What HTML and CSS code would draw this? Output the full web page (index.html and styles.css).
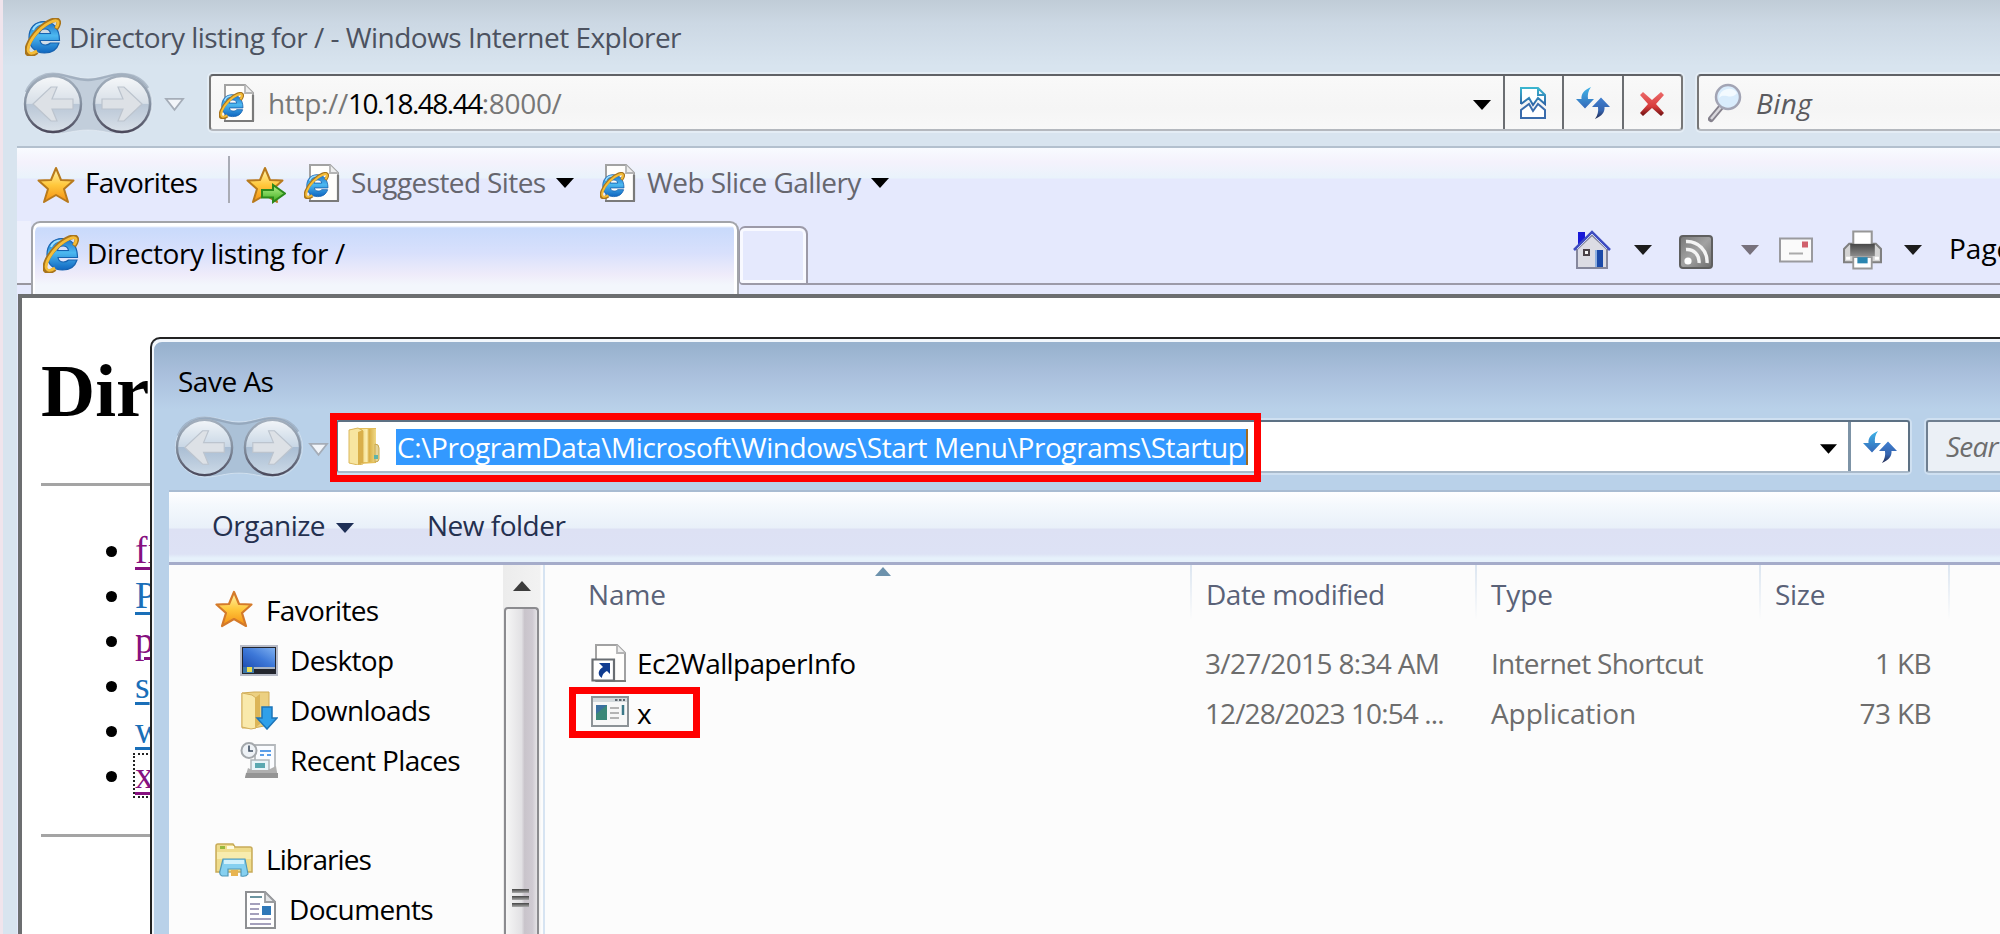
FILE: index.html
```html
<!DOCTYPE html>
<html lang="en">
<head>
<meta charset="utf-8">
<title>Directory listing for / - Windows Internet Explorer</title>
<link rel="stylesheet" href="styles.css">
</head>
<body>
<svg class="defs" width="0" height="0">
  <defs>
    <linearGradient id="blue" x1="0" y1="0" x2="0" y2="1"><stop offset="0" stop-color="#1d6fc4"/><stop offset=".45" stop-color="#4cb8f0"/><stop offset="1" stop-color="#0f66c0"/></linearGradient>
    <linearGradient id="gold" x1="0" y1="0" x2="0" y2="1"><stop offset="0" stop-color="#fff6b0"/><stop offset=".5" stop-color="#ffc83c"/><stop offset="1" stop-color="#f58f12"/></linearGradient>
    <linearGradient id="ball" x1="0" y1="0" x2="0" y2="1"><stop offset="0" stop-color="#fff" stop-opacity=".85"/><stop offset=".49" stop-color="#fff" stop-opacity=".35"/><stop offset=".5" stop-color="#a9b9ce" stop-opacity=".35"/><stop offset="1" stop-color="#fff" stop-opacity=".4"/></linearGradient>
    <linearGradient id="rim" x1="0" y1="0" x2="0" y2="1"><stop offset="0" stop-color="#a3afbd"/><stop offset=".5" stop-color="#8490a0"/><stop offset="1" stop-color="#4c4a5c"/></linearGradient>
    <linearGradient id="folder" x1="0" y1="0" x2="1" y2="0"><stop offset="0" stop-color="#f3dc85"/><stop offset=".35" stop-color="#fbeeb4"/><stop offset=".5" stop-color="#d8ae44"/><stop offset="1" stop-color="#f0d987"/></linearGradient>
    <linearGradient id="desk" x1="0" y1="1" x2="1" y2="0"><stop offset="0" stop-color="#1f4fb4"/><stop offset=".5" stop-color="#3d78d8"/><stop offset="1" stop-color="#7eb0f0"/></linearGradient>
    <linearGradient id="refr" x1="0" y1="0" x2="0" y2="1"><stop offset="0" stop-color="#3fb4e8"/><stop offset="1" stop-color="#3568b8"/></linearGradient>
    <linearGradient id="refr2" x1="0" y1="0" x2="0" y2="1"><stop offset="0" stop-color="#3f7fd0"/><stop offset=".6" stop-color="#3565b0"/><stop offset="1" stop-color="#232a50"/></linearGradient>
    <linearGradient id="cross" x1="0" y1="0" x2="0" y2="1"><stop offset="0" stop-color="#ec6a6a"/><stop offset=".6" stop-color="#d83c3c"/><stop offset="1" stop-color="#6c1010"/></linearGradient>
    <linearGradient id="gray" x1="0" y1="0" x2="1" y2="1"><stop offset="0" stop-color="#777"/><stop offset=".5" stop-color="#a2a2a2"/><stop offset="1" stop-color="#6c6c6c"/></linearGradient>
    <linearGradient id="split" x1="0" y1="0" x2="0" y2="1"><stop offset="0" stop-color="#3bb5cf"/><stop offset="1" stop-color="#2d62a6"/></linearGradient>
    <linearGradient id="dark" x1="0" y1="0" x2="0" y2="1"><stop offset="0" stop-color="#484848"/><stop offset="1" stop-color="#8c8c8c"/></linearGradient>
    <linearGradient id="green" x1="0" y1="0" x2="0" y2="1"><stop offset="0" stop-color="#b6f28c"/><stop offset="1" stop-color="#3fae20"/></linearGradient>

    <symbol id="ie" viewBox="0 0 36 38">
      <path d="M19 3.500C28 3.500 34.500 10 34.500 22.500H15C15.500 25.500 17.500 27 20.500 27C23 27 24.500 26 25.500 25H34C32 31.500 27 35 19.500 35C10 35 4 28.500 4 19.500C4 10 10 3.500 19 3.500ZM14.500 15.500H25.500C25 12.500 23 11 20 11C17 11 15 12.500 14.500 15.500Z" fill="url(#blue)" stroke="#1763b0" stroke-width="1.200"/>
      <path d="M8 12C10 7 15 5 20 5.500" fill="none" stroke="#9be0ff" stroke-width="2"/>
      <path d="M31 11C36 4 34 0 27 2.500C18 6 7 17 3 27C-1 37 5 39 12 34" fill="none" stroke="#a8741c" stroke-width="4.600"/>
      <path d="M31 10C35 4 33 1 27 3.500C18 7 8 17 4 27C1 36 6 37 12 33" fill="none" stroke="#f5bd38" stroke-width="2.800"/>
    </symbol>
    <symbol id="iepage" viewBox="0 0 36 38">
      <path d="M6 1H26L34 9V37H6Z" fill="#fffefc" stroke="#a2a2a2" stroke-width="2"/>
      <path d="M26 1V9H34" fill="#eee" stroke="#b4b4b4" stroke-width="1.800"/>
      <path d="M5 37H35M34 11V37" stroke="#7a7a7a" stroke-width="2.200" fill="none"/>
      <use href="#ie" x="0" y="8" width="25" height="27"/>
    </symbol>
    <symbol id="star" viewBox="0 0 38 38">
      <path d="M19 2L24 14L36.500 14.500L27 23L31 36L19 29L7 36L11 23L1.500 14.500L14 14Z" fill="url(#gold)" stroke="#b87a1c" stroke-width="2" stroke-linejoin="round"/>
    </symbol>
    <symbol id="starred" viewBox="0 0 38 38">
      <path d="M19 2L24 14L36.500 14.500L27 23L31 36L19 29L7 36L11 23L1.500 14.500L14 14Z" fill="url(#gold)" stroke="#d47a2a" stroke-width="2.200" stroke-linejoin="round"/>
    </symbol>
    <symbol id="addstar" viewBox="0 0 40 38">
      <use href="#star" width="38" height="38"/>
      <path d="M16 24H27V19L39 27.500L27 36V31.500H16Z" fill="url(#green)" stroke="#2c8a1c" stroke-width="2"/>
    </symbol>
    <symbol id="nav" viewBox="0 0 132 64">
      <path d="M32 1C44 1 52 6 66 6C80 6 88 1 100 1A30 30 0 0 1 100 62C88 62 80 58 66 58C52 58 44 62 32 62A30 30 0 0 1 32 1Z" fill="#8797aa" fill-opacity=".28" stroke="#eef4fa" stroke-opacity=".5" stroke-width="1"/>
      <path d="M4 20C10 5 24 1 34 2C46 3 54 8 66 8C78 8 88 2 99 2C110 2 120 6 126 16" fill="none" stroke="#7c8b9f" stroke-opacity=".45" stroke-width="2.500"/>
      <circle cx="31" cy="32" r="28" fill="url(#ball)" stroke="url(#rim)" stroke-width="2.400"/>
      <circle cx="100" cy="32" r="28" fill="url(#ball)" stroke="url(#rim)" stroke-width="2.400"/>
      <path d="M11 32L29 15H35L30 27H51V37H30L35 49H29Z" fill="#dde1e6" stroke="#bcc4ce" stroke-width="1.200"/>
      <path d="M120 32L102 15H96L101 27H80V37H101L96 49H102Z" fill="#dde1e6" stroke="#bcc4ce" stroke-width="1.200"/>
    </symbol>
    <symbol id="hist" viewBox="0 0 22 15"><path d="M2 1.500H20L11 13Z" fill="#f2f5f9" stroke="#a5adb8" stroke-width="1.800"/></symbol>
    <symbol id="down" viewBox="0 0 18 10"><path d="M0 0H18L9 10Z" fill="currentColor"/></symbol>
    <symbol id="compat" viewBox="0 0 28 34">
      <path d="M2 18V2H19L26 9V18L19 12L14 19L10 12L2 18M19 2V9H26" fill="#fff" stroke="url(#split)" stroke-width="2"/>
      <path d="M2 32V24L10 18L14 25L19 18L26 24V32Z" fill="#fff" stroke="#3a6cac" stroke-width="2"/>
    </symbol>
    <symbol id="refresh" viewBox="0 0 34 32">
      <path d="M15 0C8 3 5 7 5.500 12H0L9 21.500L18 12H12C11.500 8 12 4 15 0Z" fill="url(#refr)"/>
      <path d="M19 32C26 29 29 25 28.500 20H34L25 10.500L16 20H22C22.500 24 22 28 19 32Z" fill="url(#refr2)"/>
    </symbol>
    <symbol id="stop" viewBox="0 0 26 26"><path d="M1 4L4 1L13 9L22 1L25 4L17 13L25 22L22 25L13 17L4 25L1 22L9 13Z" fill="url(#cross)"/></symbol>
    <symbol id="lens" viewBox="0 0 34 40">
      <path d="M3 36L13 24" stroke="#85818c" stroke-width="6" stroke-linecap="round"/><path d="M3 36L13 24" stroke="#d9d7dc" stroke-width="2.500"/>
      <circle cx="20" cy="14" r="12" fill="#d9ecfc" stroke="#a2a4b4" stroke-width="2.500"/><path d="M11 15C16 9 23 18 29 10A10 10 0 0 0 11 15Z" fill="#f3faff"/>
    </symbol>
    <symbol id="home" viewBox="0 0 38 40">
      <path d="M4 19L19 5L34 19V38H4Z" fill="#dcdce4" stroke="#85879c" stroke-width="2"/><path d="M5 2H12V9L5 15Z" fill="#1818d8"/>
      <path d="M1 20L19 2L37 20" fill="none" stroke="#3e4cc0" stroke-width="2.600"/><path d="M4 19L19 4L34 19" fill="none" stroke="#c4cdf4" stroke-width="1"/>
      <path d="M11 20H16V25H11Z" fill="#f4f4f4" stroke="#4a4248" stroke-width="2"/><path d="M22 20H30V37H22Z" fill="#1c4aa8"/><path d="M22 20H24V37H22Z" fill="#8fb0e0"/>
    </symbol>
    <symbol id="rss" viewBox="0 0 34 34">
      <rect x="1" y="1" width="32" height="32" rx="3" fill="url(#gray)" stroke="#5f5f5f" stroke-width="2"/>
      <circle cx="9" cy="26" r="3.600" fill="#fff"/><path d="M7 14.500A12 12 0 0 1 20 28M7 6.500A20 20 0 0 1 28 28" fill="none" stroke="#f4f4f4" stroke-width="3.400"/>
    </symbol>
    <symbol id="mail" viewBox="0 0 34 25"><path d="M1 1H33V24H1Z" fill="#fafafa" stroke="#9a9a9e" stroke-width="2"/><path d="M10 16H24" stroke="#aaa" stroke-width="2"/><path d="M23 4H29V10H23Z" fill="#d0606c"/></symbol>
    <symbol id="print" viewBox="0 0 38 38">
      <path d="M1 18L6 13H32L37 18V31H1Z" fill="#d4d4d4" stroke="#808080" stroke-width="2"/><path d="M10 1H28V15H10Z" fill="#fff" stroke="#979797" stroke-width="2"/>
      <path d="M7 13H31V25H7Z" fill="url(#dark)"/><path d="M10 26H28V37H10Z" fill="#fff" stroke="#979797" stroke-width="1.800"/><path d="M14 26H24V32H14Z" fill="#2b86b0"/><path d="M3 27H7M31 27H35" stroke="#fff" stroke-width="3"/>
    </symbol>
    <symbol id="dir" viewBox="0 0 32 38">
      <path d="M1 3L10 1H28V36L12 37L1 36Z" fill="#e4bd58"/><path d="M14 2H28V35H14Z" fill="url(#folder)"/><path d="M1 3L10 1L15 4V37L10 38L1 36Z" fill="#f7e5a0" stroke="#dcb85a" stroke-width="1"/><path d="M10 5L15 3V36L10 38Z" fill="#d9af4a"/><path d="M27 17Q31 17 31 21V32Q31 35 27 35Z" fill="#e5d49a" stroke="#c9a850" stroke-width="1"/><path d="M26 28H30V32H26Z" fill="#5fb3a8"/>
    </symbol>
    <symbol id="desktop" viewBox="0 0 38 31">
      <path d="M1 1H37V30H1Z" fill="#23262e" stroke="#b8bcc8" stroke-width="2"/><path d="M3 3H35V22H3Z" fill="url(#desk)"/><path d="M3 22L35 22V24H3Z" fill="#a8b4c4"/><path d="M3 22H14V28H3Z" fill="#3c78a8"/><path d="M7 22H12V27H7Z" fill="#e8dc50"/>
    </symbol>
    <symbol id="downloads" viewBox="0 0 38 39">
      <path d="M2 2L14 1H29V34L14 37H2Z" fill="#ecd081" stroke="#d0ab54" stroke-width="1"/><path d="M2 2L12 4L16 7V37L11 38L2 36Z" fill="#f9e9ab" stroke="#d4b05c" stroke-width="1"/><path d="M15 7L20 3V33L15 37Z" fill="#dcb557"/><path d="M22 16H32V27H37L27 38L17 27H22Z" fill="#2fa0ea" stroke="#1d74b8" stroke-width="1.500"/>
    </symbol>
    <symbol id="recent" viewBox="0 0 38 37">
      <path d="M15 3H35V28H15Z" fill="#fafcff" stroke="#b4b8bc" stroke-width="1.800"/><path d="M20 9H31M20 13H24M27 13H31" stroke="#5a9ee8" stroke-width="2"/><path d="M11 18H29V29H11Z" fill="#e8f4f8" stroke="#b0b6ba" stroke-width="1.500"/><path d="M15 21H25V26H15Z" fill="#5aa8b0"/><path d="M8 26L12 28H28L36 24L38 36H5Z" fill="#b0b0b0"/><path d="M6 31H38V36H5Z" fill="#959595"/>
      <circle cx="9" cy="8.500" r="7.500" fill="#eef2f6" stroke="#a4a8ac" stroke-width="2"/><path d="M9 3.500V9H13" fill="none" stroke="#3c4c60" stroke-width="1.600"/>
    </symbol>
    <symbol id="libs" viewBox="0 0 38 34">
      <path d="M1 3Q1 1 3 1H18L20 4H35Q37 4 37 6V29H1Z" fill="#efdc8c" stroke="#c8ab58" stroke-width="1.500"/><path d="M5 3H10V6H5Z" fill="#96b83c"/><path d="M12 3H19V6H12Z" fill="#fffbe0"/><path d="M2 9H36V16H2Z" fill="#f8ecae"/><path d="M8 16H30L33 31Q31 34 26 33V26H13V33H7Q4 32 5 28Z" fill="#86d0f0" stroke="#5098b8" stroke-width="1.200"/><path d="M9 17H29V21H9Z" fill="#d0f0fc"/><path d="M16 27H23V33H16Z" fill="#e8b450"/>
    </symbol>
    <symbol id="doc" viewBox="0 0 31 38">
      <path d="M1 1H20L30 11V37H1Z" fill="#fff" stroke="#8e9093" stroke-width="2"/><path d="M20 1V11H30Z" fill="#e4e6e8" stroke="#9a9c9f" stroke-width="1.800"/><path d="M5 6H17" stroke="#6c94a0" stroke-width="2"/><path d="M5 13H15M5 18H14M5 23H14M5 28H26M5 33H26" stroke="#a4a0bc" stroke-width="1.800"/><path d="M17 15H26V24H17Z" fill="#2f78b8"/>
    </symbol>
    <symbol id="shortcut" viewBox="0 0 36 38">
      <path d="M5 1H26L34 9V37H5Z" fill="#fffefc" stroke="#a2a2a2" stroke-width="2"/><path d="M26 1V9H34" fill="#eee" stroke="#b4b4b4" stroke-width="1.800"/><path d="M5 37H35" stroke="#7a7a7a" stroke-width="2"/>
      <path d="M1.500 15.500H23V36.500H1.500Z" fill="#fff" stroke="#6a6e72" stroke-width="2.200"/><path d="M8 19H19V30L16 27C12 29 11 32 11 34C6 31 7 26 12 23Z" fill="#103c90"/>
    </symbol>
    <symbol id="app" viewBox="0 0 38 31">
      <path d="M1 1H37V30H1Z" fill="#f7f7f7" stroke="#8c9296" stroke-width="2"/><path d="M2 2H36V6H2Z" fill="#d4dadd"/><path d="M24 4H34" stroke="#5c646c" stroke-width="2" stroke-dasharray="2.500 1.500"/><path d="M5 9H16V24H5Z" fill="#3b8878"/><path d="M5 9H16L5 18Z" fill="#3a70a0"/><path d="M19 12H28M19 17H28M19 22H28" stroke="#b4b4b4" stroke-width="2"/><path d="M32 9V19" stroke="#3c7888" stroke-width="2.500"/>
    </symbol>
  </defs>
</svg>

<div class="browser">
  <header class="titlebar"><svg class="ic-ie"><use href="#ie"/></svg><span class="title">Directory listing for / - Windows Internet Explorer</span></header>
  <div class="navbar">
    <svg class="navballs"><use href="#nav"/></svg>
    <svg class="history"><use href="#hist"/></svg>
    <div class="address">
      <svg class="ic-page"><use href="#iepage"/></svg>
      <span class="url">http://<b>10.18.48.44</b>:8000/</span>
      <svg class="caret addr-caret"><use href="#down"/></svg>
      <div class="cell"><svg class="ic-compat"><use href="#compat"/></svg></div>
      <div class="cell"><svg class="ic-refresh"><use href="#refresh"/></svg></div>
      <div class="cell"><svg class="ic-stop"><use href="#stop"/></svg></div>
    </div>
    <div class="search"><svg class="ic-lens"><use href="#lens"/></svg><span class="bing">Bing</span></div>
  </div>
  <div class="chrome">
    <div class="favbar">
      <svg class="ic-star"><use href="#star"/></svg><span class="fav-label">Favorites</span>
      <i class="sep"></i>
      <svg class="ic-add"><use href="#addstar"/></svg>
      <svg class="ic-page fav-page"><use href="#iepage"/></svg><span class="fav-link sites">Suggested Sites</span><svg class="caret"><use href="#down"/></svg>
      <svg class="ic-page slice-page"><use href="#iepage"/></svg><span class="fav-link slices">Web Slice Gallery</span><svg class="caret"><use href="#down"/></svg>
    </div>
    <div class="tabrow">
      <div class="tab-lead"></div>
      <div class="tab"><svg class="ic-ie"><use href="#ie"/></svg><span class="tab-label">Directory listing for /</span></div>
      <div class="newtab"></div>
      <div class="cmds">
        <svg class="ic-home"><use href="#home"/></svg><svg class="caret dk c1"><use href="#down"/></svg>
        <svg class="ic-rss"><use href="#rss"/></svg><svg class="caret dim c2"><use href="#down"/></svg>
        <svg class="ic-mail"><use href="#mail"/></svg>
        <svg class="ic-print"><use href="#print"/></svg><svg class="caret dk c3"><use href="#down"/></svg>
        <span class="page">Page</span>
      </div>
    </div>
    <main class="viewport">
      <h1>Dir</h1>
      <hr>
      <ul>
        <li><a class="seen">fi</a></li>
        <li><a>P</a></li>
        <li><a class="seen">p</a></li>
        <li><a>s</a></li>
        <li><a>w</a></li>
        <li><a class="seen focus">x</a></li>
      </ul>
      <hr>
    </main>
  </div>
</div>

<section class="dialog">
  <div class="dlg-title">Save As</div>
  <div class="dlg-nav">
    <svg class="navballs"><use href="#nav"/></svg>
    <svg class="history"><use href="#hist"/></svg>
    <div class="path">
      <svg class="ic-dir"><use href="#dir"/></svg>
      <span class="path-text">C:\ProgramData\Microsoft\Windows\Start Menu\Programs\Startup</span>
      <svg class="caret path-caret"><use href="#down"/></svg>
      <div class="path-refresh"><svg class="ic-refresh"><use href="#refresh"/></svg></div>
    </div>
    <div class="dlg-search">Sear</div>
  </div>
  <div class="dlg-body">
    <div class="toolbar"><span class="organize">Organize</span><svg class="caret org-caret"><use href="#down"/></svg><span class="newfolder">New folder</span></div>
    <div class="panes">
      <nav class="tree">
        <div class="node root"><svg class="ic-star"><use href="#starred"/></svg><span>Favorites</span></div>
        <div class="node"><svg class="ic-desktop"><use href="#desktop"/></svg><span>Desktop</span></div>
        <div class="node"><svg class="ic-dl"><use href="#downloads"/></svg><span>Downloads</span></div>
        <div class="node"><svg class="ic-recent"><use href="#recent"/></svg><span>Recent Places</span></div>
        <div class="node root gap"><svg class="ic-libs"><use href="#libs"/></svg><span class="t-libs">Libraries</span></div>
        <div class="node"><svg class="ic-doc"><use href="#doc"/></svg><span>Documents</span></div>
      </nav>
      <div class="scrollbar"><i class="up"></i><div class="thumb"><i></i><i></i><i></i></div></div>
      <div class="files">
        <div class="row head">
          <div class="name">Name</div><div class="date">Date modified</div><div class="type">Type</div><div class="size">Size</div>
          <i class="sort"></i>
        </div>
        <div class="row"><div class="name"><svg class="ic-short"><use href="#shortcut"/></svg><span class="t-ec2">Ec2WallpaperInfo</span></div><div class="date">3/27/2015 8:34 AM</div><div class="type t-short">Internet Shortcut</div><div class="size">1 KB</div></div>
        <div class="row"><div class="name"><svg class="ic-app"><use href="#app"/></svg><span>x</span></div><div class="date d2">12/28/2023 10:54 ...</div><div class="type t-app">Application</div><div class="size">73 KB</div></div>
      </div>
    </div>
  </div>
</section>
<div class="mark mark-path"></div>
<div class="mark mark-file"></div>
</body>
</html>
```
FILE: styles.css
```css
* { box-sizing: border-box; }
html, body { margin: 0; height: 934px; overflow: hidden; }
body { position: relative; font: 28px/36px "Open Sans", "Noto Sans", sans-serif; letter-spacing: -0.5px; color: #000; }
svg { display: block; flex: none; }
.defs { position: absolute; }
span { white-space: nowrap; }

.browser { width: 2000px; height: 934px; overflow: hidden; border-left: 3px solid #f0e4ec; background: linear-gradient(#c0ccd7, #ccd8e4 24px, #d8e4ef 66px); }
.titlebar { display: flex; align-items: center; height: 66px; padding: 8px 0 0 22px; color: #4c5260; }
.titlebar .title { margin: -1px 0 0 8px; letter-spacing: -0.53px; }
.ic-ie { width: 36px; height: 38px; }

.navbar { display: flex; height: 80px; padding-left: 19px; }
.navballs { width: 132px; height: 64px; margin-top: 6px; }
.history { width: 21px; height: 15px; margin: 31px 0 0 10px; }
.address, .search { display: flex; height: 57px; margin-top: 8px; background: linear-gradient(#f9f9f9, #f5f5f5 60%, #f8f8f8); border: 2px solid #777; border-top-color: #606266; border-bottom-color: #b4b8be; border-radius: 4px; box-shadow: 0 0 0 2px #e4edf5; }
.address { width: 1474px; margin-left: 24px; }
.ic-page { width: 36px; height: 38px; }
.address .ic-page { margin: 8px 0 0 8px; }
.url { width: 1206px; margin: 9px 0 0 13px; color: #777; letter-spacing: -0.3px; }
.url b { font-weight: 400; color: #000; letter-spacing: -1.5px; }
.caret { width: 18px; height: 10px; color: #000; }
.addr-caret { margin: 24px 12px 0 -1px; }
.cell { display: flex; justify-content: center; align-items: center; width: 59.500px; border-left: 2px solid #6b6e72; }
.ic-compat { width: 28px; height: 34px; }
.ic-refresh { width: 34px; height: 32px; }
.ic-stop { width: 26px; height: 26px; margin-top: 3px; }
.search { flex: 1; margin-left: 14px; border-right: 0; border-radius: 4px 0 0 4px; }
.ic-lens { width: 34px; height: 40px; margin: 7px 0 0 9px; }
.bing { margin: 9px 0 0 14px; font-style: italic; color: #5a5a5e; letter-spacing: 0.4px; }

.chrome { display: flex; flex-direction: column; height: 788px; margin-left: 14px; border-top: 2px solid #b3c0ce; background: linear-gradient(#f8fbff, #f4f2fc 14px, #e9f3fb 30px, #e5e9fd 31px, #e5e9fd 100%); }
.favbar { display: flex; height: 73px; padding-left: 20px; }
.ic-star { width: 38px; height: 38px; }
.favbar .ic-star { margin-top: 18px; }
.fav-label { width: 120px; margin: 16px 0 0 10px; letter-spacing: -0.7px; }
.sep { width: 2px; height: 47px; margin: 8px 0 0 23px; background: #a9abb5; }
.ic-add { width: 40px; height: 38px; margin: 18px 0 0 16px; }
.favbar .ic-page { margin-top: 16px; }
.fav-page { margin-left: 18px; }
.fav-link { margin: 16px 0 0 11px; color: #66666e; }
.sites { width: 197px; letter-spacing: -0.6px; }
.slices { width: 216px; letter-spacing: -0.55px; }
.favbar .caret { margin-top: 30px; margin-left: 8px; }
.favbar .slice-page { margin-left: 26px; }

.tabrow { display: flex; height: 73px; }
.tab-lead { flex: none; width: 14px; height: 64px; border-bottom: 2px solid #98969f; background: #eef0fd; }
.tab { display: flex; flex: none; width: 708px; height: 73px; padding: 12px 0 0 10px; border: solid #a2a4aa; border-width: 2px 2px 0; border-radius: 9px 9px 0 0; background: linear-gradient(#fff 0, #fff 3px, #c9dafb 5px, #d8e0fc 30px, #efecfa 52px, #f3f6fc 62px); box-shadow: inset 2px 2px 0 #fff, inset -3px 0 0 #fff; }
.tab-label { margin: 0 0 0 8px; letter-spacing: -0.4px; }
.newtab { flex: none; width: 69px; height: 59px; margin-top: 5px; border: 2px solid #9c9aa8; border-left-width: 1px; border-radius: 6px 8px 0 4px; box-shadow: inset 0 0 0 3px #f8f9ff; }
.cmds { display: flex; flex: 1; min-width: 0; height: 64px; padding-left: 765px; border-bottom: 2px solid #9c9aa8; }
.dk { color: #1c1c1c; }
.dim { color: #77717c; }
.ic-home { width: 38px; height: 40px; margin-top: 9px; }
.cmds .caret { margin-top: 24px; }
.c1, .c2, .c3 { margin-left: 23px; }
.ic-rss { width: 34px; height: 34px; margin: 14px 0 0 27px; }
.cmds .c2 { margin-left: 28px; }
.ic-mail { width: 34px; height: 28px; margin: 15px 0 0 20px; }
.ic-print { width: 39px; height: 40px; margin: 9px 0 0 30px; }
.cmds .c3 { margin-left: 22px; }
.page { margin: 9px 0 0 27px; letter-spacing: 0; }

.viewport { flex: 1; border: solid #6c6e70; border-width: 4px 0 0 4px; margin-left: 1px; background: #fff; padding-left: 19px; font: 37.500px/45px "Liberation Serif", "Times New Roman", serif; letter-spacing: 0; overflow: hidden; }
.viewport h1 { margin: 49px 0 0; font-size: 75px; line-height: 88px; white-space: nowrap; }
.viewport hr { height: 3px; margin: 48px 0 0; border: 0; background: #a4a4a4; }
.viewport ul { margin: 42px 0 0; padding-left: 94px; }
.viewport a { color: #1a6fb8; text-decoration: underline; text-decoration-thickness: 3px; text-underline-offset: 4px; }
.viewport a.seen { color: #86107f; }
.viewport a.focus { outline: 2px dotted #222; }
.viewport ul + hr { margin-top: 36px; }

.dialog { position: absolute; left: 150px; top: 337px; width: 1850px; height: 597px; overflow: hidden; border: solid #222; border-width: 2px 0 0 2px; border-radius: 10px 0 0 0; box-shadow: inset 2px 3px 0 #f2f7fc; background: linear-gradient(#98b2ce 0, #98b2ce 6px, #a9bfdc 34px, #b9d1e9 70px, #b9d1e9 100%); }
.dlg-title { height: 74px; padding: 24px 0 0 26px; letter-spacing: -0.5px; }
.dlg-nav { display: flex; height: 77px; padding-left: 22px; }
.dlg-nav .navballs { width: 130px; height: 63px; margin-top: 3px; }
.dlg-nav .history { margin: 29px 0 0 4px; }
.path { display: flex; flex: none; width: 1574px; height: 53px; margin: 7px 0 0 7px; border: 2px solid #5d7184; border-bottom-color: #a9b9c9; border-radius: 3px; background: #fff; box-shadow: 0 0 0 2px #cfe0f1; }
.ic-dir { width: 32px; height: 38px; margin: 5px 0 0 10px; }
.path-text { width: 852px; height: 36px; margin: 7px 0 0 16px; padding-left: 1px; border-right: 2px solid #a06a20; color: #fff; background: #3399ff; letter-spacing: -0.41px; line-height: 36px; }
.path-caret { width: 17px; margin: 22px 11px 0 572px; }
.path-refresh { display: flex; flex: 1; align-items: center; justify-content: center; border-left: 3px solid #7d93a6; }
.dlg-search { flex: 1; height: 53px; margin: 7px 0 0 16px; padding: 6px 0 0 18px; border: 2px solid #6f7f90; border-right: 0; border-bottom-color: #a9b9c9; border-radius: 3px 0 0 3px; background: #ebf0f6; box-shadow: 0 0 0 2px #cfe0f1; font-style: italic; color: #6d6d6d; letter-spacing: -0.8px; white-space: nowrap; }
.dlg-body { margin-left: 17px; height: 444px; background: #fcfcfc; }
.toolbar { display: flex; height: 75px; padding: 15px 0 0 43px; border-top: 2px solid #a9bcd2; border-bottom: 3px solid #a5acca; color: #24304f; background: linear-gradient(#fff, #f5f9fd 12px, #e9f0f9 36px, #dde1f4 37px, #dde2f5 62px, #e6f1fb 66px); }
.organize { width: 113px; }
.org-caret { margin: 16px 0 0 11px; color: #1e2f56; }
.newfolder { margin-left: 73px; }
.panes { display: flex; height: 369px; }
.tree { width: 334px; padding-top: 21px; }
.node { display: flex; align-items: center; height: 49.800px; padding-left: 71px; letter-spacing: -0.65px; }
.node span { margin-top: -1px; }
.node svg { margin-right: 12px; }
.node.root { padding-left: 46px; }
.node.root svg { margin-right: 13px; }
.node.root .ic-star { margin-top: -4px; }
.node.gap { margin-top: 49.800px; }
.ic-desktop { width: 38px; height: 31px; }
.ic-dl { width: 38px; height: 39px; }
.ic-recent { width: 38px; height: 37px; }
.ic-libs { width: 38px; height: 34px; }
.node .ic-doc { width: 31px; height: 38px; margin: 0 13px 0 5px; }
.t-libs { letter-spacing: -0.95px; }
.scrollbar { width: 42px; overflow: hidden; border-right: 2px solid #d7e4f2; background: linear-gradient(90deg, #ececec, #f2f2f2 37px, #fcfcfc 38px); }
.up { display: block; width: 0; height: 0; margin: 16px 0 0 10px; border: 9px solid transparent; border-top: 0; border-bottom: 10px solid #3c3c3c; }
.thumb { width: 35px; height: 327px; margin: 16px 0 0 1px; padding: 280px 0 0 6px; border: 2px solid #8b8b8f; border-bottom: 0; border-radius: 4px 4px 0 0; background: linear-gradient(90deg, #f6f6f6, #e2e1e4 50%, #c9c4cb 60%, #cfcad2 85%, #e4e2e6); }
.thumb i { display: block; width: 17px; height: 4px; margin-bottom: 3px; background: linear-gradient(#444, #aaa); }
.files { flex: 1; }
.row { display: flex; height: 50px; color: #6d6d6d; }
.row > div { display: flex; align-items: center; padding-bottom: 2px; white-space: nowrap; }
.row .name { width: 647px; padding-left: 46px; color: #000; }
.row .name svg { margin-right: 10px; }
.row .date { width: 285px; padding-left: 13px; letter-spacing: -0.65px; }
.row .type { width: 284px; padding-left: 14px; letter-spacing: -0.1px; }
.row .size { width: 189px; padding-right: 19px; justify-content: flex-end; letter-spacing: -0.6px; }
.row .d2 { letter-spacing: -0.9px; }
.row .t-short { letter-spacing: -0.7px; }
.t-ec2 { letter-spacing: -0.65px; }
.head { position: relative; height: 74px; }
.head > div, .head .name { height: 54px; padding-top: 4px; padding-bottom: 0; color: #5a6278; border-right: 2px solid; border-image: linear-gradient(#dbe5f0, #fcfcfc) 1; }
.head .name { padding-left: 43px; letter-spacing: -0.1px; }
.head .date { padding-left: 14px; letter-spacing: -0.5px; }
.head .size { justify-content: flex-start; padding-left: 14px; letter-spacing: -0.3px; }
.sort { position: absolute; left: 330px; top: 2px; width: 0; height: 0; border: 8px solid transparent; border-top: 0; border-bottom: 9px solid #6d92ac; }
.ic-short { width: 36px; height: 38px; }
.ic-app { width: 38px; height: 31px; }
.row .name .ic-app { margin-right: 8px; margin-top: -3px; }

.mark { position: absolute; border: 7px solid #f00; }
.mark-path { left: 330px; top: 413px; width: 931px; height: 69px; }
.mark-file { left: 569px; top: 687px; width: 131px; height: 51px; }
```
